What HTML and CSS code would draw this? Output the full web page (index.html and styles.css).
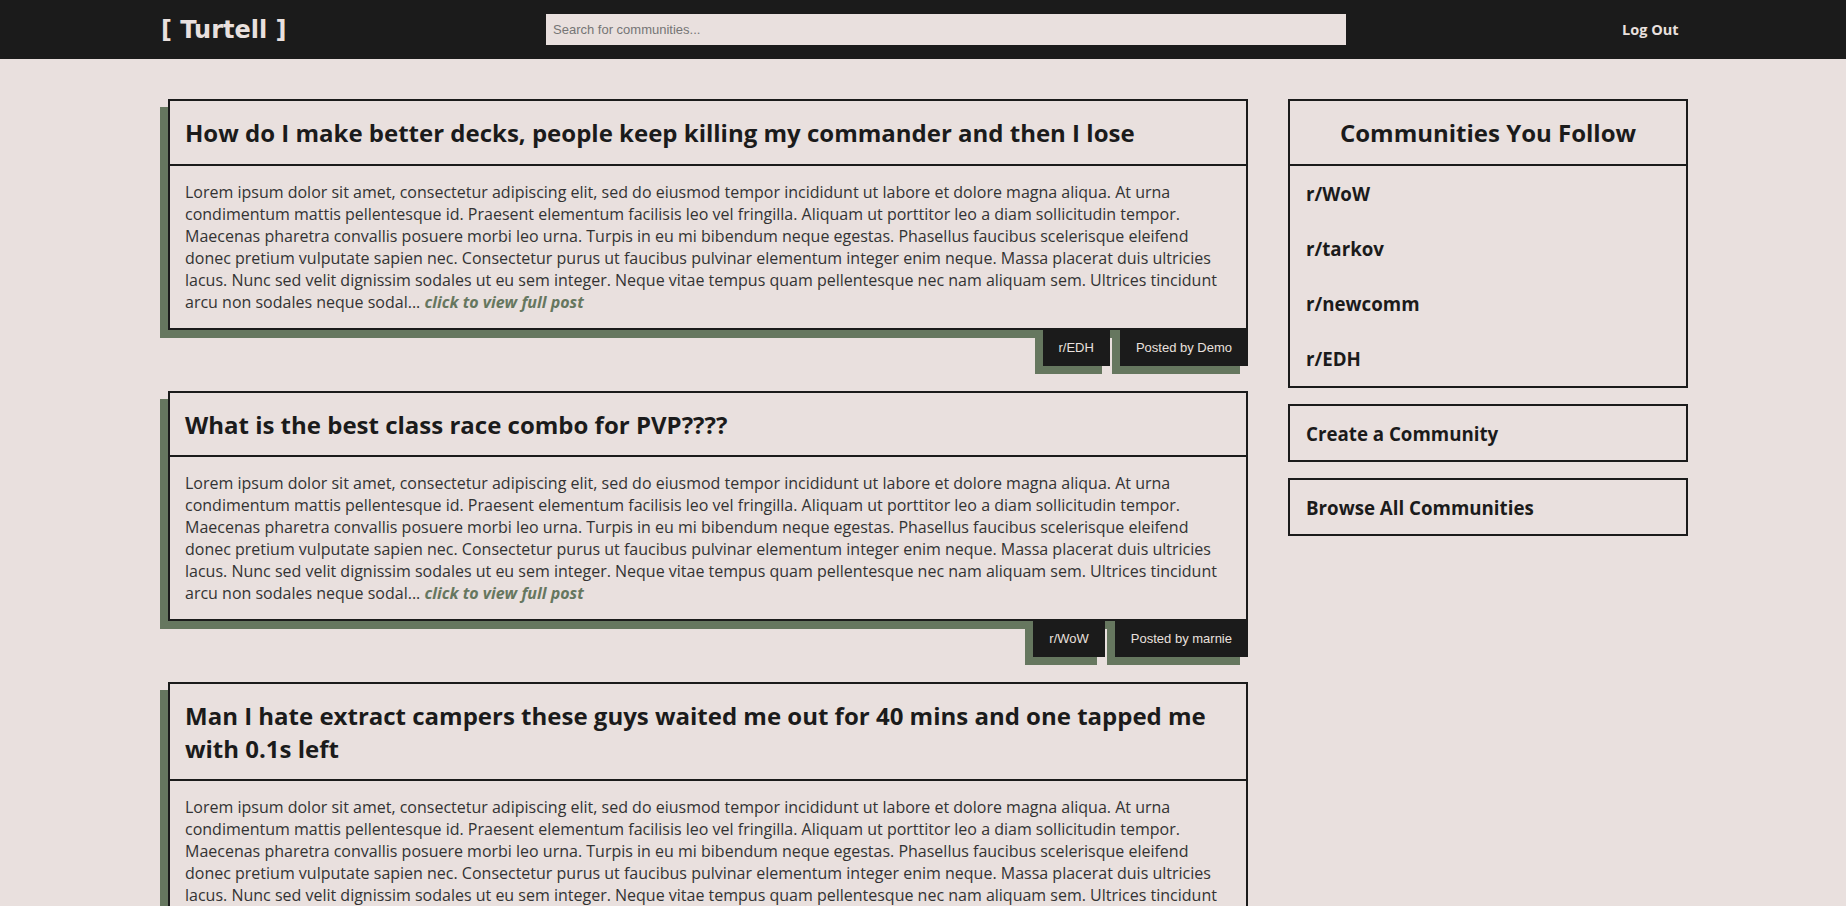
FILE: index.html
```html
<!DOCTYPE html>
<html lang="en">
<head>
<meta charset="utf-8">
<title>Turtell</title>
<link rel="stylesheet" href="styles.css">
</head>
<body>
<header class="topbar">
  <div class="logo">[ Turtell ]</div>
  <input class="search" type="text" placeholder="Search for communities...">
  <a class="logout" href="#">Log Out</a>
</header>
<div class="page">
  <main class="feed">
    <article class="post">
      <div class="card">
        <h2 class="post-title">How do I make better decks, people keep killing my commander and then I lose</h2>
        <p class="post-body">Lorem ipsum dolor sit amet, consectetur adipiscing elit, sed do eiusmod tempor incididunt ut labore et dolore magna aliqua. At urna condimentum mattis pellentesque id. Praesent elementum facilisis leo vel fringilla. Aliquam ut porttitor leo a diam sollicitudin tempor. Maecenas pharetra convallis posuere morbi leo urna. Turpis in eu mi bibendum neque egestas. Phasellus faucibus scelerisque eleifend donec pretium vulputate sapien nec. Consectetur purus ut faucibus pulvinar elementum integer enim neque. Massa placerat duis ultricies lacus. Nunc sed velit dignissim sodales ut eu sem integer. Neque vitae tempus quam pellentesque nec nam aliquam sem. Ultrices tincidunt arcu non sodales neque sodal... <a class="more" href="#">click to view full post</a></p>
      </div>
      <div class="tags"><span class="tag">r/EDH</span><span class="tag">Posted by Demo</span></div>
    </article>
    <article class="post">
      <div class="card">
        <h2 class="post-title">What is the best class race combo for PVP????</h2>
        <p class="post-body">Lorem ipsum dolor sit amet, consectetur adipiscing elit, sed do eiusmod tempor incididunt ut labore et dolore magna aliqua. At urna condimentum mattis pellentesque id. Praesent elementum facilisis leo vel fringilla. Aliquam ut porttitor leo a diam sollicitudin tempor. Maecenas pharetra convallis posuere morbi leo urna. Turpis in eu mi bibendum neque egestas. Phasellus faucibus scelerisque eleifend donec pretium vulputate sapien nec. Consectetur purus ut faucibus pulvinar elementum integer enim neque. Massa placerat duis ultricies lacus. Nunc sed velit dignissim sodales ut eu sem integer. Neque vitae tempus quam pellentesque nec nam aliquam sem. Ultrices tincidunt arcu non sodales neque sodal... <a class="more" href="#">click to view full post</a></p>
      </div>
      <div class="tags"><span class="tag">r/WoW</span><span class="tag">Posted by marnie</span></div>
    </article>
    <article class="post">
      <div class="card">
        <h2 class="post-title">Man I hate extract campers these guys waited me out for 40 mins and one tapped me with 0.1s left</h2>
        <p class="post-body">Lorem ipsum dolor sit amet, consectetur adipiscing elit, sed do eiusmod tempor incididunt ut labore et dolore magna aliqua. At urna condimentum mattis pellentesque id. Praesent elementum facilisis leo vel fringilla. Aliquam ut porttitor leo a diam sollicitudin tempor. Maecenas pharetra convallis posuere morbi leo urna. Turpis in eu mi bibendum neque egestas. Phasellus faucibus scelerisque eleifend donec pretium vulputate sapien nec. Consectetur purus ut faucibus pulvinar elementum integer enim neque. Massa placerat duis ultricies lacus. Nunc sed velit dignissim sodales ut eu sem integer. Neque vitae tempus quam pellentesque nec nam aliquam sem. Ultrices tincidunt arcu non sodales neque sodal... <a class="more" href="#">click to view full post</a></p>
      </div>
      <div class="tags"><span class="tag">r/tarkov</span><span class="tag">Posted by Demo</span></div>
    </article>
  </main>
  <aside class="sidebar">
    <section class="box">
      <h2 class="box-title">Communities You Follow</h2>
      <ul class="community-list">
        <li><h3 class="community">r/WoW</h3></li>
        <li><h3 class="community">r/tarkov</h3></li>
        <li><h3 class="community">r/newcomm</h3></li>
        <li><h3 class="community">r/EDH</h3></li>
      </ul>
    </section>
    <a class="box action" href="#"><h3 class="community">Create a Community</h3></a>
    <a class="box action" href="#"><h3 class="community">Browse All Communities</h3></a>
  </aside>
</div>
</body>
</html>
```
FILE: styles.css
```css
* { box-sizing: border-box; }

html, body {
  margin: 0;
  padding: 0;
}

body {
  background: #e9e0de;
  color: #1b1b1b;
  font-family: "Open Sans", "Liberation Sans", sans-serif;
}

.topbar {
  height: 59px;
  background: #1b1b1b;
  display: grid;
  grid-template-columns: 385px 800px 1fr;
  align-items: center;
  padding-left: 161px;
}

.logo {
  font-family: "DejaVu Sans", sans-serif;
  font-weight: bold;
  font-size: 24px;
  color: #e9e0de;
  line-height: 1;
}

.search {
  height: 31px;
  width: 800px;
  border: none;
  outline: none;
  background: #e9e0de;
  padding: 0 7px;
  font-family: "Liberation Sans", Arial, sans-serif;
  font-size: 13px;
  color: #1b1b1b;
}

.search::placeholder {
  color: #757575;
}

.logout {
  padding-left: 276px;
  color: #e9e0de;
  font-family: "Open Sans", sans-serif;
  font-weight: bold;
  font-size: 14.5px;
  text-decoration: none;
}

.page {
  width: 1530px;
  margin: 40px auto 0;
  padding-left: 10px;
  display: flex;
  gap: 40px;
  align-items: flex-start;
}

.feed {
  width: 1080px;
  flex: none;
  display: flex;
  flex-direction: column;
  gap: 25px;
}

.post {
  display: flex;
  flex-direction: column;
}

.card {
  border: 2px solid #1b1b1b;
  box-shadow: -8px 8px 0 #66775f;
  background: #e9e0de;
}

.post-title {
  margin: 0;
  padding: 16px 15px 14px;
  font-size: 24px;
  line-height: 32.5px;
  font-weight: 700;
  color: #1b1b1b;
  border-bottom: 2px solid #1b1b1b;
}

.post-body {
  margin: 0;
  padding: 15px 15px 15px;
  font-size: 16px;
  line-height: 22px;
  color: #333333;
}

.more {
  color: #66775f;
  font-weight: 700;
  font-style: italic;
  text-decoration: none;
}

.tags {
  display: flex;
  justify-content: flex-end;
  gap: 10px;
  margin-top: -1px;
}

.tag {
  background: #1b1b1b;
  color: #e9e0de;
  font-family: "Liberation Sans", Arial, sans-serif;
  font-size: 13px;
  height: 37px;
  line-height: 37px;
  padding: 0 16px;
  box-shadow: -8px 8px 0 #66775f;
}

.sidebar {
  width: 400px;
  flex: none;
  display: flex;
  flex-direction: column;
  gap: 16px;
}

.box {
  display: block;
  border: 2px solid #1b1b1b;
  color: #1b1b1b;
  text-decoration: none;
}

.box-title {
  margin: 0;
  padding: 16px 15px 14px;
  font-size: 24px;
  line-height: 32.5px;
  font-weight: 700;
  text-align: center;
  border-bottom: 2px solid #1b1b1b;
}

.community-list {
  list-style: none;
  margin: 0;
  padding: 0;
}

.community {
  margin: 0;
  font-size: 18.72px;
  line-height: 25px;
  font-weight: 700;
  color: #1b1b1b;
}

.community-list li {
  padding: 15px 16px;
}

.action {
  padding: 15px 16px 14px;
}
```
